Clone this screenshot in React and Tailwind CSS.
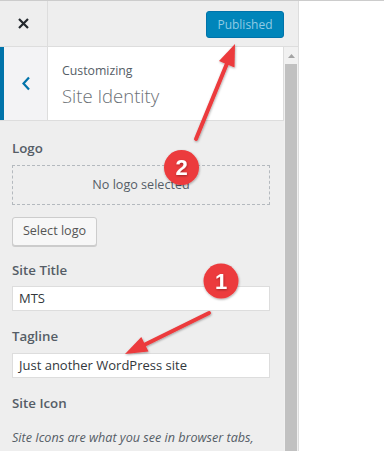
import React from 'react';

const font = { fontFamily: '"Open Sans", "Noto Sans", sans-serif' };

const Label = ({ children, className = '' }) => (
  <div className={`text-[13.3px] leading-[20px] font-semibold text-[#555d66] ${className}`}>{children}</div>
);

const Annotations = () => (
  <svg className="absolute inset-0 pointer-events-none" width="384" height="451" viewBox="0 0 384 451">
    <defs>
      <filter id="sh" x="-20%" y="-20%" width="140%" height="140%">
        <feDropShadow dx="0.5" dy="1" stdDeviation="0.8" floodColor="#000" floodOpacity="0.35" />
      </filter>
    </defs>
    <g filter="url(#sh)">
      <line x1="196" y1="138" x2="228" y2="60" stroke="#ec3a3c" strokeWidth="4" strokeLinecap="round" />
      <polygon points="235,43 234.5,66.5 219,60" fill="#ec3a3c" />
      <line x1="209" y1="312" x2="142" y2="345" stroke="#ec3a3c" strokeWidth="4" strokeLinecap="round" />
      <polygon points="125,353 148.5,350.5 141.3,336" fill="#ec3a3c" />
      <circle cx="181.5" cy="166.5" r="17.5" fill="#ec3a3c" />
      <circle cx="221" cy="280" r="17.5" fill="#ec3a3c" />
    </g>
    <text x="181.5" y="174" textAnchor="middle" fill="#fff" fontSize="22" fontWeight="700" fontFamily="Liberation Sans, sans-serif" filter="url(#sh)">2</text>
    <text x="221" y="288" textAnchor="middle" fill="#fff" fontSize="22" fontWeight="700" fontFamily="Liberation Sans, sans-serif" filter="url(#sh)">1</text>
  </svg>
);

export default function App() {
  return (
    <div className="relative w-[384px] h-[451px] overflow-hidden bg-white border-t border-[#cccccc]" style={font}>
      <div className="w-[299px] h-full flex flex-col bg-[#eeeeee] border-r border-[#dddddd]">
        {/* header */}
        <div className="h-[46px] shrink-0 flex items-start border-b border-[#dddddd]">
          <div className="w-[48px] h-full border-r border-[#dddddd] flex items-center justify-center">
            <svg width="11" height="11" viewBox="0 0 11 11">
              <path d="M1 1 L10 10 M10 1 L1 10" stroke="#23282d" strokeWidth="2.2" />
            </svg>
          </div>
          <div className="flex-1" />
          <div className="mt-[10px] mr-[14px] w-[78px] h-[27px] rounded-[3px] bg-[#0085ba] border border-[#0073aa] flex items-center justify-center text-[12px] text-[#8fcbe4]">
            Published
          </div>
        </div>
        {/* body */}
        <div className="flex-1 flex min-h-0">
          <div className="w-[284px] flex flex-col">
            <div className="h-[74px] shrink-0 flex border-b border-[#dddddd]">
              <div className="w-[4px] bg-[#0073aa]" />
              <div className="w-[44px] bg-[#f3f3f5] border-r border-[#dddddd] flex items-center justify-center">
                <svg width="10" height="15" viewBox="0 0 10 15">
                  <path d="M8 1.5 L2.5 7.5 L8 13.5" fill="none" stroke="#0073aa" strokeWidth="2.2" />
                </svg>
              </div>
              <div className="flex-1 bg-white border-r border-[#dddddd] pl-[14px] pt-[15px]">
                <div className="text-[12.3px] leading-[18px] text-[#555d66]">Customizing</div>
                <div className="mt-[3px] text-[18.5px] leading-[26px] font-light text-[#6b7075]">Site Identity</div>
              </div>
            </div>
            <div className="pl-[12px] pr-[14px] pt-[17px]">
              <Label>Logo</Label>
              <div className="mt-[7px] w-[258px] h-[40px] border border-dashed border-[#b4b9be] flex items-center justify-center text-[12.6px] text-[#555d66]">
                No logo selected
              </div>
              <div className="mt-[12px] w-[85px] h-[29px] rounded-[3px] border border-[#cccccc] bg-[#f7f7f7] shadow-[0_1px_0_#cccccc] flex items-center justify-center text-[12.6px] text-[#555555]">
                Select logo
              </div>
              <Label className="mt-[14px]">Site Title</Label>
              <div className="mt-[6px] w-[258px] h-[25px] bg-white border border-[#dddddd] flex items-center pl-[6px] text-[13px] text-[#32373c]">
                MTS
              </div>
              <Label className="mt-[15px]">Tagline</Label>
              <div className="mt-[7px] w-[258px] h-[25px] bg-white border border-[#dddddd] flex items-center pl-[6px] text-[13px] text-[#32373c]">
                Just another WordPress site
              </div>
              <Label className="mt-[15px]">Site Icon</Label>
              <div className="mt-[16px] text-[12.6px] leading-[18px] italic text-[#555d66] whitespace-nowrap">
                Site Icons are what you see in browser tabs,
              </div>
            </div>
          </div>
          <div className="w-[14px] flex flex-col bg-[#f1f1f1]">
            <div className="h-[17px] flex items-center justify-center">
              <svg width="7" height="4" viewBox="0 0 7 4"><path d="M0 4 L3.5 0 L7 4 Z" fill="#a3a3a3" /></svg>
            </div>
            <div className="flex-1 mx-[1px] bg-[#c1c1c1]" />
          </div>
        </div>
      </div>
      <Annotations />
    </div>
  );
}
